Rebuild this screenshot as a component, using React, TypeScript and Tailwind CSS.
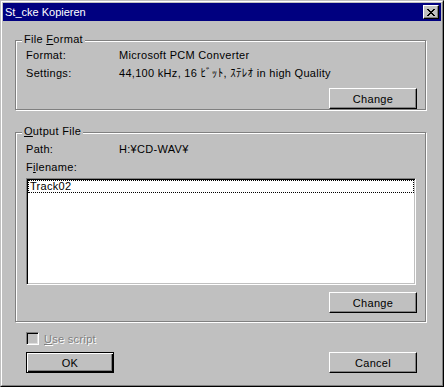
import React from "react";

function CloseBtn() {
  return (
    <div className="w-[16px] h-[14px] bg-[#c0c0c0] border border-t-white border-l-white border-r-black border-b-black shadow-[inset_-1px_-1px_0_#808080] flex items-center justify-center">
      <svg width="8" height="7" viewBox="0 0 8 7" shapeRendering="crispEdges">
        <path
          fill="#000"
          d="M0 0h2v1H0z M6 0h2v1H6z M1 1h2v1H1z M5 1h2v1H5z M2 2h4v1H2z M3 3h2v1H3z M2 4h4v1H2z M1 5h2v1H1z M5 5h2v1H5z M0 6h2v1H0z M6 6h2v1H6z"
        />
      </svg>
    </div>
  );
}

function Button({ children }: { children: React.ReactNode }) {
  return (
    <div className="w-[88px] h-[21px] bg-[#c0c0c0] border border-t-white border-l-white border-r-black border-b-black shadow-[inset_-1px_-1px_0_#808080] flex items-center justify-center">
      {children}
    </div>
  );
}

function DefaultButton({ children }: { children: React.ReactNode }) {
  return (
    <div className="w-[88px] h-[21px] bg-[#c0c0c0] border border-black shadow-[inset_1px_1px_0_#fff,inset_-1px_-1px_0_#000,inset_-2px_-2px_0_#808080] flex items-center justify-center">
      {children}
    </div>
  );
}

function Legend({ children }: { children: React.ReactNode }) {
  return (
    <div className="-mt-[9px] ml-[6px] w-fit h-[14px] px-[2px] bg-[#c0c0c0] leading-[14px]">
      {children}
    </div>
  );
}

export default function App() {
  return (
    <div className="w-[444px] h-[387px] flex border border-t-[#c0c0c0] border-l-[#c0c0c0] border-r-black border-b-black bg-[#c0c0c0] font-['Liberation_Sans','Noto_Sans_CJK_JP',sans-serif] text-[11px] text-black leading-[14px]">
      <div className="flex-1 flex flex-col border border-t-white border-l-white border-r-[#808080] border-b-[#808080] p-[1px]">
        {/* Title bar */}
        <div className="h-[18px] shrink-0 bg-[#000080] flex items-center justify-between pl-[2px] pr-[2px]">
          <span className="text-white">St_cke Kopieren</span>
          <CloseBtn />
        </div>

        <div className="flex flex-col tracking-[0.3px]">
          {/* File Format group */}
          <div className="mt-[19px] ml-[12px] w-[411px] h-[70px] shrink-0 border border-[#808080] shadow-[inset_1px_1px_0_#fff,1px_1px_0_#fff] flex flex-col">
            <Legend>
              File <u>F</u>ormat
            </Legend>
            <div className="h-[18px] flex items-center pl-[10px]">
              <span className="w-[93px]">Format:</span>
              <span>Microsoft PCM Converter</span>
            </div>
            <div className="h-[18px] flex items-center pl-[10px]">
              <span className="w-[93px]">Settings:</span>
              <span>44,100 kHz, 16 ﾋﾞｯﾄ, ｽﾃﾚｵ in high Quality</span>
            </div>
            <div className="mt-[6px] pr-[8px] flex justify-end">
              <Button>
                Chan<u>g</u>e
              </Button>
            </div>
          </div>

          {/* Output File group */}
          <div className="mt-[22px] ml-[12px] w-[411px] h-[190px] shrink-0 border border-[#808080] shadow-[inset_1px_1px_0_#fff,1px_1px_0_#fff] flex flex-col">
            <Legend>
              <u>O</u>utput File
            </Legend>
            <div className="mt-[2px] h-[18px] flex items-center pl-[10px]">
              <span className="w-[93px]">Path:</span>
              <span>H:¥CD-WAV¥</span>
            </div>
            <div className="h-[18px] flex items-center pl-[10px]">
              <span>
                F<u>i</u>lename:
              </span>
            </div>
            <div className="mt-[2px] ml-[10px] w-[390px] h-[107px] bg-white border border-t-[#808080] border-l-[#808080] border-r-white border-b-white shadow-[inset_1px_1px_0_#000,inset_-1px_-1px_0_#c0c0c0] p-[1px]">
              <div className="h-[13px] border border-dotted border-black flex items-center pl-[1px] leading-[11px]">
                Track02
              </div>
            </div>
            <div className="mt-[7px] pr-[8px] flex justify-end">
              <Button>Change</Button>
            </div>
          </div>

          {/* Use script */}
          <div className="mt-[10px] ml-[23px] h-[13px] flex items-center gap-[5px]">
            <div className="w-[13px] h-[13px] bg-[#c0c0c0] border border-t-[#808080] border-l-[#808080] border-r-white border-b-white shadow-[inset_1px_1px_0_#000,inset_-1px_-1px_0_#dfdfdf]" />
            <span className="text-[#808080] [text-shadow:1px_1px_0_#fff]">
              <u>U</u>se script
            </span>
          </div>

          {/* Bottom buttons */}
          <div className="mt-[7px] ml-[23px] mr-[24px] flex justify-between">
            <DefaultButton>OK</DefaultButton>
            <Button>Cancel</Button>
          </div>
        </div>
      </div>
    </div>
  );
}
